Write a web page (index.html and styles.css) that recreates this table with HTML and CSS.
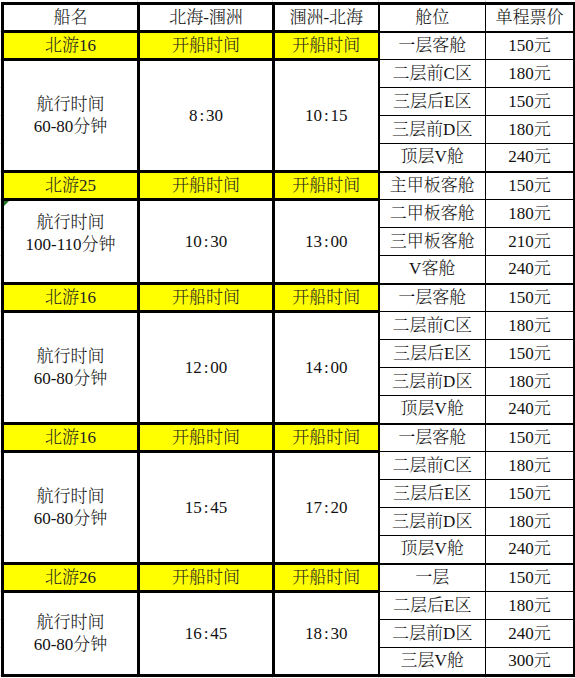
FILE: index.html
```html
<!DOCTYPE html>
<html lang="zh-CN">
<head>
<meta charset="utf-8">
<title>北海-涠洲 船期票价</title>
<link rel="stylesheet" href="styles.css">
</head>
<body>
<table class="sched">
  <colgroup>
    <col class="w1"><col class="w2"><col class="w3"><col class="w4"><col class="w5">
  </colgroup>
  <tr class="head">
    <th class="k">船名</th><th class="k">北海-涠洲</th><th class="k k3">涠洲-北海</th><th class="c4 top">舱位</th><th class="c5 top">单程票价</th>
  </tr>

  <tr class="g">
    <td class="k yel">北游16</td><td class="k yel">开船时间</td><td class="k k3 yel">开船时间</td><td class="c4">一层客舱</td><td class="c5">150元</td>
  </tr>
  <tr>
    <td class="k" rowspan="4">航行时间<br>60-80分钟</td><td class="k" rowspan="4">8<span class="col">:</span>30</td><td class="k k3" rowspan="4">10<span class="col">:</span>15</td><td class="c4">二层前C区</td><td class="c5">180元</td>
  </tr>
  <tr><td class="c4">三层后E区</td><td class="c5">150元</td></tr>
  <tr><td class="c4">三层前D区</td><td class="c5">180元</td></tr>
  <tr><td class="c4">顶层V舱</td><td class="c5">240元</td></tr>

  <tr class="g">
    <td class="k yel">北游25</td><td class="k yel">开船时间</td><td class="k k3 yel">开船时间</td><td class="c4">主甲板客舱</td><td class="c5">150元</td>
  </tr>
  <tr>
    <td class="k note" rowspan="3"><span class="flag"></span><span class="lift">航行时间<br>100-110分钟</span></td><td class="k" rowspan="3">10<span class="col">:</span>30</td><td class="k k3" rowspan="3">13<span class="col">:</span>00</td><td class="c4">二甲板客舱</td><td class="c5">180元</td>
  </tr>
  <tr><td class="c4">三甲板客舱</td><td class="c5">210元</td></tr>
  <tr><td class="c4">V客舱</td><td class="c5">240元</td></tr>

  <tr class="g">
    <td class="k yel">北游16</td><td class="k yel">开船时间</td><td class="k k3 yel">开船时间</td><td class="c4">一层客舱</td><td class="c5">150元</td>
  </tr>
  <tr>
    <td class="k" rowspan="4">航行时间<br>60-80分钟</td><td class="k" rowspan="4">12<span class="col">:</span>00</td><td class="k k3" rowspan="4">14<span class="col">:</span>00</td><td class="c4">二层前C区</td><td class="c5">180元</td>
  </tr>
  <tr><td class="c4">三层后E区</td><td class="c5">150元</td></tr>
  <tr><td class="c4">三层前D区</td><td class="c5">180元</td></tr>
  <tr><td class="c4">顶层V舱</td><td class="c5">240元</td></tr>

  <tr class="g">
    <td class="k yel">北游16</td><td class="k yel">开船时间</td><td class="k k3 yel">开船时间</td><td class="c4">一层客舱</td><td class="c5">150元</td>
  </tr>
  <tr>
    <td class="k" rowspan="4">航行时间<br>60-80分钟</td><td class="k" rowspan="4">15<span class="col">:</span>45</td><td class="k k3" rowspan="4">17<span class="col">:</span>20</td><td class="c4">二层前C区</td><td class="c5">180元</td>
  </tr>
  <tr><td class="c4">三层后E区</td><td class="c5">150元</td></tr>
  <tr><td class="c4">三层前D区</td><td class="c5">180元</td></tr>
  <tr><td class="c4">顶层V舱</td><td class="c5">240元</td></tr>

  <tr class="g">
    <td class="k yel">北游26</td><td class="k yel">开船时间</td><td class="k k3 yel">开船时间</td><td class="c4">一层</td><td class="c5">150元</td>
  </tr>
  <tr>
    <td class="k" rowspan="3">航行时间<br>60-80分钟</td><td class="k" rowspan="3">16<span class="col">:</span>45</td><td class="k k3" rowspan="3">18<span class="col">:</span>30</td><td class="c4">二层后E区</td><td class="c5">180元</td>
  </tr>
  <tr><td class="c4">二层前D区</td><td class="c5">240元</td></tr>
  <tr class="last"><td class="c4">三层V舱</td><td class="c5">300元</td></tr>
</table>
</body>
</html>
```

FILE: styles.css
```css
html, body {
  margin: 0;
  padding: 0;
}

body {
  width: 575px;
  height: 678px;
  overflow: hidden;
  background-color: #fff;
  background-image:
    linear-gradient(to right, transparent 137px, #d9d9d9 137px, #d9d9d9 138px, transparent 138px,
      transparent 272px, #d9d9d9 272px, #d9d9d9 273px, transparent 273px,
      transparent 378px, #d9d9d9 378px, #d9d9d9 379px, transparent 379px,
      transparent 485px, #d9d9d9 485px, #d9d9d9 486px, transparent 486px),
    repeating-linear-gradient(to bottom, transparent 0, transparent 27px, #d9d9d9 27px, #d9d9d9 28px);
  background-position: 0 0, 0 4px;
  background-repeat: no-repeat, repeat;
  font-family: "Liberation Serif", "Noto Serif CJK SC", "Noto Sans CJK SC", serif;
  color: #111;
}

.sched {
  border-collapse: collapse;
  table-layout: fixed;
  width: 572px;
  margin: 2px 0 0 1px;
  background: #fff;
}

.w1 { width: 136px; }
.w2 { width: 135px; }
.w3 { width: 105px; }
.w4 { width: 107px; }
.w5 { width: 89px; }

.sched tr {
  height: 28px;
}

.sched th,
.sched td {
  padding: 0;
  text-align: center;
  vertical-align: middle;
  font-weight: 300;
  font-size: 17px;
  line-height: 22px;
  white-space: nowrap;
  border: 1px solid #000;
}

.sched .k {
  border: 3px solid #000;
}

.sched .k3 {
  border-right-width: 2px;
}

.sched .c4 {
  border-left: 2px solid #000;
  border-right: 1px solid #000;
}

.sched .c5 {
  border-left: 1px solid #000;
  border-right: 3px solid #000;
}

.sched .top {
  border-top: 3px solid #000;
}

.sched .g .c4,
.sched .g .c5 {
  border-top-width: 2px;
}

.sched .last .c4,
.sched .last .c5 {
  border-bottom: 3px solid #000;
}

.sched .yel {
  background: #ffff00;
  color: #222;
}

.col {
  padding: 0 2px;
}

.note {
  position: relative;
}

.lift {
  display: inline-block;
  position: relative;
  top: -8px;
}

.flag {
  position: absolute;
  left: 0;
  top: 0;
  width: 0;
  height: 0;
  border-top: 5px solid #1f7a1f;
  border-right: 5px solid transparent;
}
```
